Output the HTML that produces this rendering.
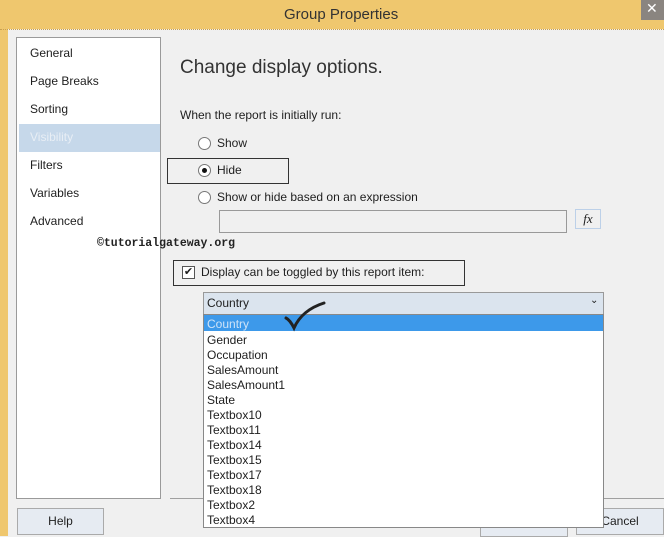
<!DOCTYPE html>
<html><head><style>
body{margin:0;width:664px;height:536px;overflow:hidden;background:#f0f0f0;font-family:"Liberation Sans",sans-serif;font-size:12px;color:#1e1e1e;position:relative}
.a{position:absolute}
.nav div{position:absolute;left:13px}
.rad{position:absolute;width:11px;height:11px;border:1px solid #777;border-radius:50%;background:#fff}
.li{position:absolute;left:3px;font-size:12px}
</style></head><body>
<div class="a" style="left:0;top:0;width:664px;height:29px;background:#efc76e"></div>
<div class="a" style="left:0;top:29px;width:8px;height:507px;background:#efc76e"></div>
<div class="a" style="left:0;top:29px;width:664px;border-top:1px dotted #c9a050"></div>
<div class="a" style="left:284px;top:6px;font-size:15px;color:#333">Group Properties</div>
<div class="a" style="left:641px;top:0;width:23px;height:20px;background:#8a8580"></div>
<div class="a" style="left:646px;top:0;color:#fff;font-size:14px">✕</div>
<div class="a nav" style="left:16px;top:37px;width:143px;height:460px;background:#fff;border:1px solid #9a9a9a">
 <div style="top:8px">General</div>
 <div style="top:36px">Page Breaks</div>
 <div style="top:64px">Sorting</div>
 <div style="left:2px;top:86px;width:141px;height:28px;background:#c6d8ea"></div>
 <div style="top:92px;color:#e8eef5">Visibility</div>
 <div style="top:120px">Filters</div>
 <div style="top:148px">Variables</div>
 <div style="top:176px">Advanced</div>
</div>
<div class="a" style="left:180px;top:57px;font-size:19px;color:#333">Change display options.</div>
<div class="a" style="left:180px;top:108px">When the report is initially run:</div>
<div class="rad" style="left:198px;top:137px"></div><div class="a" style="left:217px;top:136px">Show</div>
<div class="a" style="left:167px;top:158px;width:120px;height:24px;border:1px solid #333"></div>
<div class="rad" style="left:198px;top:164px"></div><div class="a" style="left:202px;top:168px;width:5px;height:5px;border-radius:50%;background:#111"></div>
<div class="a" style="left:217px;top:163px">Hide</div>
<div class="rad" style="left:198px;top:191px"></div><div class="a" style="left:217px;top:190px">Show or hide based on an expression</div>
<div class="a" style="left:219px;top:210px;width:346px;height:21px;background:#f0f0f0;border:1px solid #999"></div>
<div class="a" style="left:575px;top:209px;width:24px;height:18px;border:1px solid #bcd0e8;font-style:italic;font-family:'Liberation Serif',serif;font-size:13px;text-align:center;line-height:18px">fx</div>
<div class="a" style="left:97px;top:237px;font-family:'Liberation Mono',monospace;font-weight:bold;font-size:11.5px;color:#222">©tutorialgateway.org</div>
<div class="a" style="left:173px;top:260px;width:290px;height:24px;border:1px solid #333"></div>
<div class="a" style="left:182px;top:266px;width:11px;height:11px;border:1px solid #555;background:#fff;font-size:11px;line-height:11px;text-align:center">✔</div>
<div class="a" style="left:201px;top:265px">Display can be toggled by this report item:</div>
<div class="a" style="left:170px;top:498px;width:494px;border-top:1px solid #a0a0a0"></div>
<div class="a" style="left:17px;top:508px;width:85px;height:25px;border:1px solid #aaa;background:#e6ebf2;text-align:center;line-height:25px">Help</div>
<div class="a" style="left:480px;top:510px;width:86px;height:25px;border:1px solid #aaa;background:#e6ebf2"></div>
<div class="a" style="left:576px;top:508px;width:86px;height:25px;border:1px solid #aaa;background:#e6ebf2;text-align:center;line-height:25px">Cancel</div>
<div class="a" style="left:203px;top:292px;width:399px;height:22px;background:#dbe4ee;border:1px solid #999"></div>
<div class="a" style="left:207px;top:296px">Country</div>
<div class="a" style="left:590px;top:295px;font-size:10px">⌄</div>
<div class="a" style="left:203px;top:314px;width:399px;height:212px;background:#fff;border:1px solid #888">
 <div class="a" style="left:0;top:0;width:399px;height:16px;background:#3d99ea"></div>
 <div class="li" style="top:2px;color:#cfe3f7">Country</div>
 <div class="li" style="top:18px">Gender</div>
 <div class="li" style="top:33px">Occupation</div>
 <div class="li" style="top:48px">SalesAmount</div>
 <div class="li" style="top:63px">SalesAmount1</div>
 <div class="li" style="top:78px">State</div>
 <div class="li" style="top:93px">Textbox10</div>
 <div class="li" style="top:108px">Textbox11</div>
 <div class="li" style="top:123px">Textbox14</div>
 <div class="li" style="top:138px">Textbox15</div>
 <div class="li" style="top:153px">Textbox17</div>
 <div class="li" style="top:168px">Textbox18</div>
 <div class="li" style="top:183px">Textbox2</div>
 <div class="li" style="top:198px">Textbox4</div>
</div>
<svg class="a" style="left:280px;top:300px" width="50" height="32"><path d="M6 18 Q10 20 14 28 Q22 10 44 3" stroke="#222" stroke-width="3" fill="none" stroke-linecap="round"/></svg>
</body></html>
